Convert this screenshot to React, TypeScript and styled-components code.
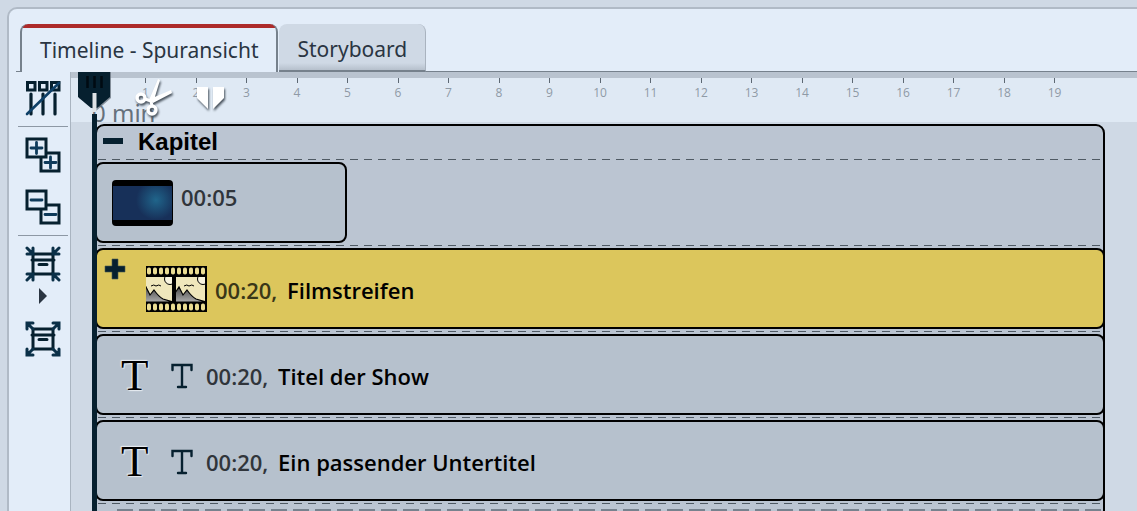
import React from "react";
import styled, { createGlobalStyle, css } from "styled-components";

const ink = "#06202f";
const uiFont = `"Open Sans", "Noto Sans", sans-serif`;

const GlobalStyle = createGlobalStyle`
  * { box-sizing: border-box; }
  html, body { margin: 0; height: 100%; }
  body { background: #cfd9e5; overflow: hidden; }
  button { margin: 0; padding: 0; border: 0; background: none; font: inherit; color: inherit; cursor: pointer; }
  svg { display: block; }
`;

const Page = styled.main`
  display: flex;
  height: 100vh;
  padding: 7px 0 0 7px;
  overflow: hidden;
  font-family: ${uiFont};
`;

const Panel = styled.section`
  display: flex;
  flex-direction: column;
  flex: 1;
  min-width: 0;
  border: solid #b0bac6;
  border-width: 2px 0 0 2px;
  border-radius: 10px 0 0 0;
  background: #e3edf9;
`;

const TabBar = styled.div`
  display: flex;
  height: 63px;
  padding: 15px 0 0 7px;
`;

const TabRule = styled.span<{ $width?: number }>`
  flex: ${(p) => (p.$width ? `0 0 ${p.$width}px` : "1")};
  border-bottom: 1px solid #76818c;
`;

const Tab = styled.button<{ $active?: boolean }>`
  height: 48px;
  padding: 3px 18px 0;
  font-family: "Noto Sans", sans-serif;
  font-size: 21px;
  line-height: 24px;
  color: #2a3542;
  white-space: nowrap;
  border-radius: 8px 8px 0 0;
  ${(p) =>
    p.$active
      ? css`
          border: solid #76818c;
          border-width: 0 2px 0 2px;
          background: linear-gradient(#ad2a2a 4px, #e3edf9 4px);
        `
      : css`
          margin-left: 1px;
          border: solid #a9b3bf;
          border-width: 0 1px 2px 0;
          border-bottom-color: #76818c;
          background: linear-gradient(#cfd9e5 39px, #b6c0cc 46px);
        `}
`;

const Body = styled.div`
  display: flex;
  flex: 1;
  min-height: 0;
`;

const Toolbar = styled.div`
  display: flex;
  flex-direction: column;
  align-items: center;
  gap: 10px;
  flex: 0 0 62px;
  padding: 8px 0 0 7px;
  border-right: 1px solid #a9b4c0;
`;

const ToolGroup = styled.div<{ $gap: number }>`
  display: flex;
  flex-direction: column;
  align-items: center;
  gap: ${(p) => p.$gap}px;
`;

const ToolButton = styled.button`
  display: block;
`;

const Divider = styled.hr`
  width: 50px;
  height: 1px;
  margin: 0;
  border: 0;
  background: #8d98a5;
`;

const Timeline = styled.div`
  position: relative;
  flex: 1;
  min-width: 0;
  overflow: hidden;
  background: #cfd9e5;
`;

const Ruler = styled.div`
  height: 50px;
  padding: 0 32px 0 24px;
  border-top: 6px solid #b9c3cf;
  background: #dfe9f4;
`;

const Ticks = styled.ol`
  display: grid;
  grid-template-columns: repeat(20, 1fr);
  margin: 0;
  padding: 0;
  list-style: none;
`;

const Tick = styled.li`
  display: flex;
  flex-direction: column;
  align-items: center;
  width: 20px;
  margin-left: -10px;
  font-size: 12px;
  line-height: 20px;
  color: #8f9aa6;

  &::before {
    content: "";
    width: 1px;
    height: 5px;
    background: #5d6873;
  }

  &:first-child {
    visibility: hidden;
  }
`;

const RulerUnit = styled.div`
  margin: -5px 0 0 -3px;
  font-family: "Noto Sans", sans-serif;
  font-size: 24px;
  line-height: 30px;
  color: #66717c;
`;

const Chapter = styled.section`
  height: 500px;
  margin: 2px 32px 0 24px;
  border: 2px solid #000;
  border-radius: 9px;
  background: #bbc5d2;
`;

const ChapterHead = styled.header`
  display: flex;
  align-items: flex-start;
  gap: 15px;
  height: 33px;
  padding-left: 6px;
`;

const ChapterTitle = styled.h2`
  margin: 0;
  font: bold 24px/32px "Liberation Sans", sans-serif;
  color: #000;
`;

const Dashes = styled.div<{ $below?: number }>`
  height: 1px;
  margin: 0 0 ${(p) => p.$below ?? 2}px 1px;
  background: repeating-linear-gradient(90deg, #4f5a64 0 8px, transparent 8px 14px);
`;

const NextTrack = styled.div`
  height: 2px;
  margin: 0 0 0 20px;
  background: repeating-linear-gradient(90deg, #77828e 0 16px, transparent 16px 22px);
`;

const Clip = styled.article<{ $short?: boolean; $selected?: boolean; $pad: number; $gap: number }>`
  position: relative;
  display: flex;
  align-items: center;
  gap: ${(p) => p.$gap}px;
  width: ${(p) => (p.$short ? "25%" : "auto")};
  height: 81px;
  margin: 0 -2px 2px;
  padding-left: ${(p) => p.$pad}px;
  border: 2px solid #000;
  border-radius: 8px;
  background: ${(p) => (p.$selected ? "#dcc65c" : "#b6c1cd")};
`;

const ClipText = styled.p<{ $raised?: boolean; $selected?: boolean }>`
  margin: ${(p) => (p.$raised ? "0 0 12px" : "2px 0 0")};
  font-size: 22px;
  font-weight: 600;
  line-height: 30px;
  white-space: pre;
  color: ${(p) => (p.$selected ? "#3a3718" : "#30353b")};

  strong {
    margin-left: 4px;
    font-weight: 600;
    color: #000;
  }
`;

const TitleGlyph = styled.span`
  width: 28px;
  font: 45px/50px "Liberation Serif", serif;
  color: #000;
  text-shadow: 0 0 2px #e8edf2, 1px 1px 1px #e8edf2, -1px -1px 1px #e8edf2;
`;

const IconSlot = styled.span`
  padding: 2px 13px 0 22px;
`;

const ExpandButton = styled.button`
  position: absolute;
  left: 7px;
  top: 8px;
`;

const Playhead = styled.div`
  position: absolute;
  left: 7px;
  top: 0;
  bottom: 0;
  display: flex;
  flex-direction: column;
  align-items: center;
  width: 33px;
`;

const PlayLine = styled.div`
  flex: 1;
  width: 5px;
  background: ${ink};
`;

const CutTools = styled.div`
  position: absolute;
  left: 62px;
  top: 6px;
  display: flex;
  gap: 20px;

  svg {
    filter: drop-shadow(1px 2px 1px #46505a);
  }
`;

const TracksIcon = () => (
  <svg width="36" height="36" viewBox="0 0 36 36" fill="none" stroke={ink} strokeWidth="3.2">
    <path d="M2.500 2.500h7.500v7.500H2.500zM14.500 2.500h7.500v7.500h-7.500zM26.500 2.500h7.500v7.500h-7.500z" strokeWidth="3" />
    <path d="M6 14v20M18 14v20M30 14v20" strokeLinecap="round" />
    <path d="M2 34 34 3" stroke="#0e4068" strokeWidth="2.6" strokeLinecap="round" />
  </svg>
);

const BoxesIcon = ({ plus }: { plus?: boolean }) => (
  <svg width="36" height="36" viewBox="0 0 36 36" fill="none" stroke={ink} strokeWidth="3">
    <path d="M2 2h19v18H2z" />
    <path d="M22 16h12v18H16V21" />
    <path
      d={plus ? "M6 11h11M11.500 5.500v11M20 25.500h11M25.500 20v11" : "M6 11h11M20 25.500h11"}
      stroke="#0e3a5a"
      strokeWidth="2.800"
      strokeLinecap="round"
    />
  </svg>
);

const FitIcon = ({ outward }: { outward?: boolean }) => (
  <svg width="36" height="36" viewBox="0 0 36 36" fill="none" strokeWidth="3">
    <path d="M8 8h20v20H8zM7 14h22M14 18.500h8" stroke={ink} strokeLinecap="round" />
    <path
      d={
        outward
          ? "M2 8V2h6M28 2h6v6M34 28v6h-6M8 34H2v-6M2 2l6 6M34 2l-6 6M34 34l-6-6M2 34l6-6"
          : "M8 2v6H2M28 2v6h6M28 34v-6h6M8 34v-6H2M2 2l6 6M34 2l-6 6M34 34l-6-6M2 34l6-6"
      }
      stroke="#0b3048"
      strokeWidth="3"
      strokeLinecap="round"
    />
  </svg>
);

const ArrowIcon = () => (
  <svg width="8" height="16" viewBox="0 0 8 16">
    <path d="M0 0v16l8-8z" fill="#2a3542" />
  </svg>
);

const MinusIcon = () => (
  <svg width="20" height="30" viewBox="0 0 20 30">
    <path d="M0 12h20v6H0z" fill={ink} />
  </svg>
);

const PlusIcon = () => (
  <svg width="22" height="22" viewBox="0 0 22 22">
    <path d="M8 1h6v7h7v6h-7v7H8v-7H1V8h7z" fill={ink} stroke="#4a5a50" strokeWidth=".6" />
  </svg>
);

const PlayheadIcon = () => (
  <svg width="33" height="42" viewBox="0 0 33 42">
    <path d="M1 0h32v26L18 39 1 26z" fill="#5d6873" opacity=".7" />
    <path d="M0 0h32v25L19 36h-6L0 25z" fill={ink} />
    <path d="M9.500 4v12M16.500 4v12M23.500 4v12" stroke="#000a12" strokeWidth="2.500" />
    <path d="M16.500 21v19" stroke="#dfe3e6" strokeWidth="4" />
  </svg>
);

const ScissorsIcon = () => (
  <svg width="40" height="40" viewBox="0 0 40 40" fill="none">
    <circle cx="8" cy="20" r="4" stroke="#fff" strokeWidth="3.400" />
    <circle cx="19" cy="32" r="4" stroke="#fff" strokeWidth="3.400" />
    <path d="m12 21 6 2 1 5" stroke="#fff" strokeWidth="3" />
    <path d="M16 22 25 1l2 1-6 20zM17 21l21-9 1 3-19 10z" fill="#fff" />
  </svg>
);

const SplitIcon = () => (
  <svg width="32" height="40" viewBox="0 0 32 40">
    <path d="M4 9h11v22L4 20zM20 9h11v11L20 31z" fill="#fff" />
  </svg>
);

const BlueThumb = () => (
  <svg width="61" height="46" viewBox="0 0 61 46">
    <defs>
      <radialGradient id="glow" gradientUnits="userSpaceOnUse" cx="44" cy="20" r="20">
        <stop offset="0" stopColor="#20658b" />
        <stop offset="1" stopColor="#173059" />
      </radialGradient>
    </defs>
    <rect width="61" height="46" rx="4" />
    <path d="M1 6h59v34H1z" fill="url(#glow)" />
  </svg>
);

const FilmThumb = () => (
  <svg width="61" height="46" viewBox="0 0 61 46">
    <defs>
      <linearGradient id="rock" x1="0" y1="0" x2="0" y2="1">
        <stop offset="0" stopColor="#4a4a4a" />
        <stop offset="1" stopColor="#aaa" />
      </linearGradient>
      <clipPath id="frame">
        <path d="M-3 11h29v25H-3z" />
      </clipPath>
    </defs>
    <path d="M0 0h61v46H0z" />
    {[0, 1, 2, 3, 4, 5, 6, 7, 8, 9].map((i) => (
      <g key={i} fill="#eadc92">
        <rect x={1 + i * 6} y="1.500" width="4" height="7" rx="1.800" />
        <rect x={1 + i * 6} y="37.500" width="4" height="7" rx="1.800" />
      </g>
    ))}
    {[0, 33].map((x) => (
      <g key={x} transform={`translate(${x} 0)`} clipPath="url(#frame)">
        <path d="M-3 11h29v25H-3z" fill="#efe7bc" />
        <circle cx="24" cy="13" r="5.500" fill="#f8f4e0" stroke="#000" />
        <path d="M5 20q3-2 5 0 3-2 5 0" fill="none" stroke="#000" />
        <path
          d="m-4 27 4-6 4 8 4-5q5 7 9 9l10 3H-4z"
          fill="url(#rock)"
          stroke="#000"
          strokeWidth="1.200"
        />
      </g>
    ))}
  </svg>
);

const TextIcon = () => (
  <svg width="22" height="26" viewBox="0 0 22 26" fill="none" stroke={ink} strokeWidth="2.400">
    <path d="M1.500 7V2h19v5M11 2v22M7 24h8" strokeLinecap="round" />
  </svg>
);

const titleClips = ["Titel der Show", "Ein passender Untertitel"];

export default function App() {
  return (
    <>
      <GlobalStyle />
      <Page>
        <Panel>
          <TabBar role="tablist">
            <TabRule $width={4} />
            <Tab role="tab" aria-selected="true" $active>
              Timeline - Spuransicht
            </Tab>
            <Tab role="tab" aria-selected="false">
              Storyboard
            </Tab>
            <TabRule />
          </TabBar>
          <Body>
            <Toolbar role="toolbar">
              <ToolButton aria-label="Spuren">
                <TracksIcon />
              </ToolButton>
              <Divider />
              <ToolGroup $gap={16}>
                <ToolButton aria-label="Alle aufklappen">
                  <BoxesIcon plus />
                </ToolButton>
                <ToolButton aria-label="Alle zuklappen">
                  <BoxesIcon />
                </ToolButton>
              </ToolGroup>
              <Divider />
              <ToolGroup $gap={17}>
                <ToolGroup $gap={6}>
                  <ToolButton aria-label="Verkleinern">
                    <FitIcon />
                  </ToolButton>
                  <ToolButton aria-label="Mehr">
                    <ArrowIcon />
                  </ToolButton>
                </ToolGroup>
                <ToolButton aria-label="Einpassen">
                  <FitIcon outward />
                </ToolButton>
              </ToolGroup>
            </Toolbar>
            <Timeline>
              <Ruler>
                <Ticks>
                  {Array.from({ length: 20 }, (_, i) => (
                    <Tick key={i}>{i}</Tick>
                  ))}
                </Ticks>
                <RulerUnit>0 min</RulerUnit>
              </Ruler>
              <Chapter>
                <ChapterHead>
                  <ToolButton aria-label="Kapitel zuklappen">
                    <MinusIcon />
                  </ToolButton>
                  <ChapterTitle>Kapitel</ChapterTitle>
                </ChapterHead>
                <Dashes />
                <Clip $short $pad={15} $gap={8}>
                  <BlueThumb />
                  <ClipText $raised>00:05</ClipText>
                </Clip>
                <Dashes />
                <Clip $selected $pad={49} $gap={8}>
                  <ExpandButton aria-label="Filmstreifen aufklappen">
                    <PlusIcon />
                  </ExpandButton>
                  <FilmThumb />
                  <ClipText $selected>
                    00:20, <strong>Filmstreifen</strong>
                  </ClipText>
                </Clip>
                <Dashes />
                {titleClips.map((title, i) => (
                  <React.Fragment key={title}>
                    <Clip $pad={24} $gap={0}>
                      <TitleGlyph>T</TitleGlyph>
                      <IconSlot>
                        <TextIcon />
                      </IconSlot>
                      <ClipText>
                        00:20, <strong>{title}</strong>
                      </ClipText>
                    </Clip>
                    <Dashes $below={i === titleClips.length - 1 ? 5 : 2} />
                  </React.Fragment>
                ))}
                <NextTrack />
              </Chapter>
              <Playhead>
                <PlayheadIcon />
                <PlayLine />
              </Playhead>
              <CutTools>
                <ToolButton aria-label="Schneiden">
                  <ScissorsIcon />
                </ToolButton>
                <ToolButton aria-label="Teilen">
                  <SplitIcon />
                </ToolButton>
              </CutTools>
            </Timeline>
          </Body>
        </Panel>
      </Page>
    </>
  );
}
